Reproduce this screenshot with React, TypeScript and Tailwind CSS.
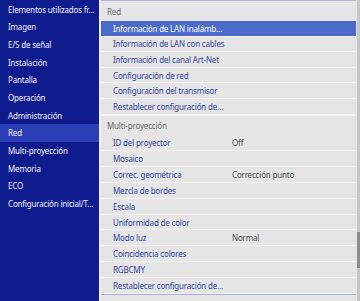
import React from "react";

const leftItems = [
  "Elementos utilizados fr...",
  "Imagen",
  "E/S de señal",
  "Instalación",
  "Pantalla",
  "Operación",
  "Administración",
  "Red",
  "Multi-proyección",
  "Memoria",
  "ECO",
  "Configuración inicial/T...",
];

const redItems: [string, string?][] = [
  ["Información de LAN inalámb..."],
  ["Información de LAN con cables"],
  ["Información del canal Art-Net"],
  ["Configuración de red"],
  ["Configuración del transmisor"],
  ["Restablecer configuración de..."],
];

const multiItems: [string, string?][] = [
  ["ID del proyector", "Off"],
  ["Mosaico"],
  ["Correc. geométrica", "Corrección punto"],
  ["Mezcla de bordes"],
  ["Escala"],
  ["Uniformidad de color"],
  ["Modo luz", "Normal"],
  ["Coincidencia colores"],
  ["RGBCMY"],
  ["Restablecer configuración de..."],
];

function Row({
  label,
  value,
  selected,
  tall,
}: {
  label: string;
  value?: string;
  selected?: boolean;
  tall?: boolean;
}) {
  return (
    <div
      className={
        (tall ? "h-[15.93px] " : "h-[15.6px] ") +
        "flex items-center border-b border-[#f2f2f2] " +
        (selected ? "bg-[#4b6bcb] text-white" : "text-[#34439c]")
      }
    >
      <div className="w-[131px] shrink-0 pl-[12px] whitespace-nowrap">{label}</div>
      {value && <div className="text-[#4a4a4a] whitespace-nowrap">{value}</div>}
    </div>
  );
}

export default function App() {
  return (
    <div
      className="w-[360px] h-[301px] flex bg-[#e5e5e5] overflow-hidden text-[8px] leading-[11px] tracking-[-0.18px]"
      style={{ fontFamily: '"Noto Sans", "Open Sans", sans-serif' }}
    >
      <div className="w-[99px] shrink-0 bg-[#0f1c8d] pt-[0.5px] text-[#eef0fa]">
        {leftItems.map((t) => (
          <div
            key={t}
            className={
              "h-[17.67px] flex items-center pl-[8px] whitespace-nowrap " +
              (t === "Red" ? "bg-[#2b3eb5]" : "")
            }
          >
            {t}
          </div>
        ))}
      </div>
      <div className="flex-1 flex">
        <div className="flex-1 border-l-2 border-[#efefef] flex flex-col">
          <div className="border-t border-[#b4b6d6]">
            <div className="h-[20px] flex items-center pl-[6px] text-[#6a6a6a]">Red</div>
            {redItems.map(([l, v], i) => (
              <Row key={l + i} label={l} value={v} selected={i === 0} />
            ))}
            <div className="h-[20.4px] flex items-center pl-[6px] text-[#6a6a6a] border-t border-[#f2f2f2]">
              Multi-proyección
            </div>
            {multiItems.map(([l, v], i) => (
              <Row key={l + i} label={l} value={v} tall />
            ))}
          </div>
          <div className="border-t border-[#a9b0d8]" />
        </div>
        <div className="w-[1px]" />
        <div className="w-[3px] bg-[#c6c6c6] flex flex-col">
          <div className="h-[232px]" />
          <div className="h-[36px] bg-[#8c8c8c]" />
        </div>
      </div>
    </div>
  );
}
